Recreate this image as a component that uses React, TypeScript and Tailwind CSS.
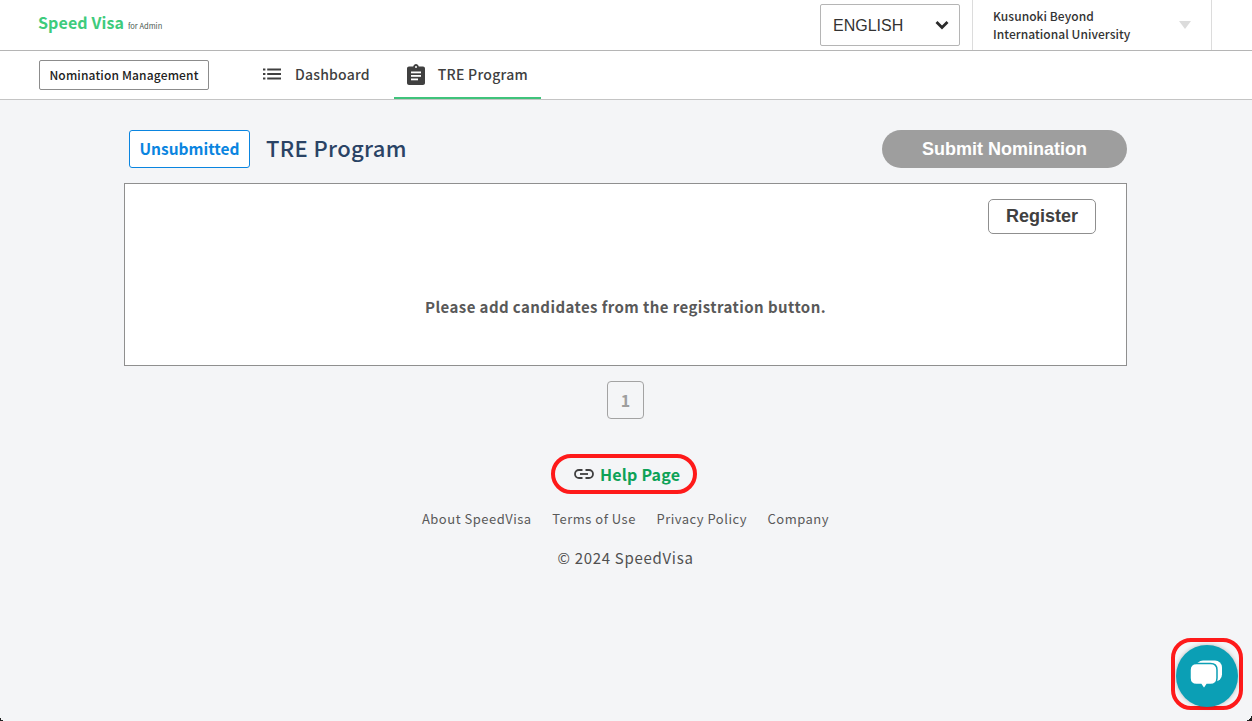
import React from 'react';

const jp = { fontFamily: '"Noto Sans CJK JP", "Noto Sans", sans-serif' };

function ListIcon() {
  return (
    <svg width="18" height="12" viewBox="0 0 18 12" fill="#404040">
      <rect x="0" y="0.5" width="2.4" height="2" />
      <rect x="0" y="5" width="2.4" height="2" />
      <rect x="0" y="9.5" width="2.4" height="2" />
      <rect x="4.2" y="0.5" width="13.8" height="2" />
      <rect x="4.2" y="5" width="13.8" height="2" />
      <rect x="4.2" y="9.5" width="13.8" height="2" />
    </svg>
  );
}

function ClipboardIcon() {
  return (
    <svg width="18" height="21" viewBox="0 0 18 21">
      <path fill="#404040" d="M2 2.500h4.200C6.600 1.100 7.700 0 9 0s2.400 1.100 2.800 2.500H16c1.100 0 2 .9 2 2V19c0 1.100-.9 2-2 2H2c-1.100 0-2-.9-2-2V4.500c0-1.100.9-2 2-2z" />
      <circle cx="9" cy="3" r="1" fill="#fff" />
      <rect x="4" y="7.500" width="10" height="1.800" fill="#fff" />
      <rect x="4" y="11" width="10" height="1.800" fill="#fff" />
      <rect x="4" y="14.500" width="7" height="1.800" fill="#fff" />
    </svg>
  );
}

function LinkIcon() {
  return (
    <svg width="20" height="10" viewBox="0 0 20 10" fill="none" stroke="#404040" strokeWidth="1.800">
      <path d="M8.500 1H5a4 4 0 0 0 0 8h3.500" />
      <path d="M11.500 1H15a4 4 0 0 1 0 8h-3.500" />
      <path d="M6 5h8" />
    </svg>
  );
}

function ChatIcon() {
  return (
    <svg width="32" height="30" viewBox="0 0 32 30">
      <rect x="6" y="0.500" width="26" height="21" rx="7" fill="#fff" />
      <path
        fill="#fff"
        stroke="#0b9fb5"
        strokeWidth="1.500"
        d="M6.500 3.500h14c4 0 6.500 2.500 6.500 6.500v8c0 4-2.500 6.500-6.500 6.500h-3.500l-3 4.500-3-4.500H6.500c-4 0-6.500-2.500-6.500-6.500v-8c0-4 2.500-6.500 6.500-6.500z"
      />
    </svg>
  );
}

export default function App() {
  return (
    <div className="relative min-h-[721px] overflow-hidden bg-[#f4f5f7] text-[#404040]" style={jp}>
      {/* top bar */}
      <header className="flex h-[51px] items-center border-b border-[#b5b5b5] bg-white">
        <div className="mb-[6px] ml-[38px] flex items-baseline gap-[4px]">
          <span className="text-[16px] font-bold tracking-[0.1px] text-[#3ecb7c]">Speed Visa</span>
          <span className="text-[7.5px] text-[#4a5a52]">for Admin</span>
        </div>
        <div className="ml-auto flex h-full items-center">
          <div className="flex h-[42px] w-[140px] items-center justify-between rounded-[2px] border border-[#b5b5b5] pl-[12px] pr-[10px] font-['Liberation_Sans',sans-serif] text-[16px] text-[#333]">
            <span className="pt-[1px]">ENGLISH</span>
            <svg width="14" height="10" viewBox="0 0 14 10" fill="none" stroke="#2b2b2b" strokeWidth="2.800">
              <path d="M1.500 2l5.500 5.500L12.500 2" />
            </svg>
          </div>
          <div className="ml-[12px] flex h-full w-[240px] items-center border-x border-[#dcdcdc] pl-[20px]">
            <div className="text-[12px] font-medium leading-[18px] tracking-[0.05px] text-[#333]">
              Kusunoki Beyond
              <br />
              International University
            </div>
            <div className="ml-auto mr-[20px] h-0 w-0 border-x-[6px] border-t-[8px] border-x-transparent border-t-[#dcdcdc]" />
          </div>
          <div className="w-[40px]" />
        </div>
      </header>

      {/* sub nav */}
      <nav className="flex h-[49px] items-center border-b border-[#c4c4c4] bg-white pl-[39px]">
        <div className="flex h-[30px] w-[170px] items-center justify-center rounded-[2px] border border-[#8c8c8c] pb-[1px] text-[12px] font-medium tracking-[0.15px] text-[#222]">
          Nomination Management
        </div>
        <div className="ml-[54px] flex items-center gap-[14px] pb-[2px] text-[14px] font-medium tracking-[0.2px]">
          <ListIcon />
          <span>Dashboard</span>
        </div>
        <div className="relative ml-[24px] flex h-full w-[147px] items-center gap-[13px] pb-[2px] pl-[13px] text-[14px] font-medium tracking-[0.28px]">
          <ClipboardIcon />
          <span>TRE Program</span>
          <div className="absolute inset-x-0 bottom-0 h-[2px] bg-[#3fc37b]" />
        </div>
      </nav>

      <main className="ml-[124px] w-[1003px] pt-[30px]">
        <div className="flex h-[38px] items-center pl-[5px]">
          <div className="flex h-[38px] w-[121px] items-center justify-center rounded-[3px] border border-[#0a85e0] bg-white pb-[1px] text-[15.500px] font-bold text-[#0a85e0]">
            Unsubmitted
          </div>
          <h1 className="mb-[4px] ml-[16px] text-[22px] font-medium tracking-[0.35px] text-[#2a4365]">TRE Program</h1>
          <button className="ml-auto h-[38px] w-[245px] rounded-full bg-[#9e9e9e] font-['Liberation_Sans',sans-serif] text-[18px] font-bold text-white">
            Submit Nomination
          </button>
        </div>

        <section className="mt-[15px] flex h-[183px] flex-col border border-[#8f8f8f] bg-white">
          <div className="flex justify-end pr-[30px] pt-[15px]">
            <button className="h-[35px] w-[108px] rounded-[5px] border border-[#8f8f8f] font-['Liberation_Sans',sans-serif] text-[18px] font-bold text-[#404040]">
              Register
            </button>
          </div>
          <p className="mt-[62px] text-center text-[15px] font-bold tracking-[0.42px] text-[#595959]">
            Please add candidates from the registration button.
          </p>
        </section>

        <div className="mt-[15px] flex justify-center">
          <div className="flex h-[38px] w-[37px] items-center justify-center rounded-[4px] border border-[#a3a3a3] text-[16px] font-bold text-[#9e9e9e]">
            1
          </div>
        </div>

        <div className="mt-[35px] flex justify-center pr-[3px]">
          <a className="flex h-[40px] w-[146px] items-center gap-[6px] rounded-full border-[4px] border-[#fe1a1a] pl-[19px] text-[16px] font-bold tracking-[0.2px] text-[#0ea257]">
            <LinkIcon />
            Help Page
          </a>
        </div>

        <footer className="mt-[15px] text-[#595959]">
          <div className="flex justify-center gap-[20.500px] text-[13px] tracking-[0.5px]">
            <span>About SpeedVisa</span>
            <span>Terms of Use</span>
            <span>Privacy Policy</span>
            <span>Company</span>
          </div>
          <p className="mt-[18px] text-center text-[15px] tracking-[0.7px] text-[#505050]">© 2024 SpeedVisa</p>
        </footer>
      </main>

      {/* chat widget with its red marker */}
      <div className="absolute bottom-[11px] right-[9px] flex h-[72px] w-[72px] items-end justify-center rounded-[20px] border-[4px] border-[#fe1a1a]">
        <div className="relative -mb-[1px] flex h-[62px] w-[62px] shrink-0 items-center justify-center rounded-full bg-[#0b9fb5] pb-[2px] pr-[2px] shadow-[0_0_4px_rgba(0,0,0,0.25)]">
          <ChatIcon />
        </div>
      </div>

      {/* window corners */}
      <div className="absolute bottom-0 left-0 h-[5px] w-[5px] bg-[radial-gradient(circle_at_top_right,transparent_70%,#222_72%)]" />
      <div className="absolute bottom-0 right-0 h-[8px] w-[8px] bg-[radial-gradient(circle_at_top_left,transparent_70%,#222_72%)]" />
    </div>
  );
}
